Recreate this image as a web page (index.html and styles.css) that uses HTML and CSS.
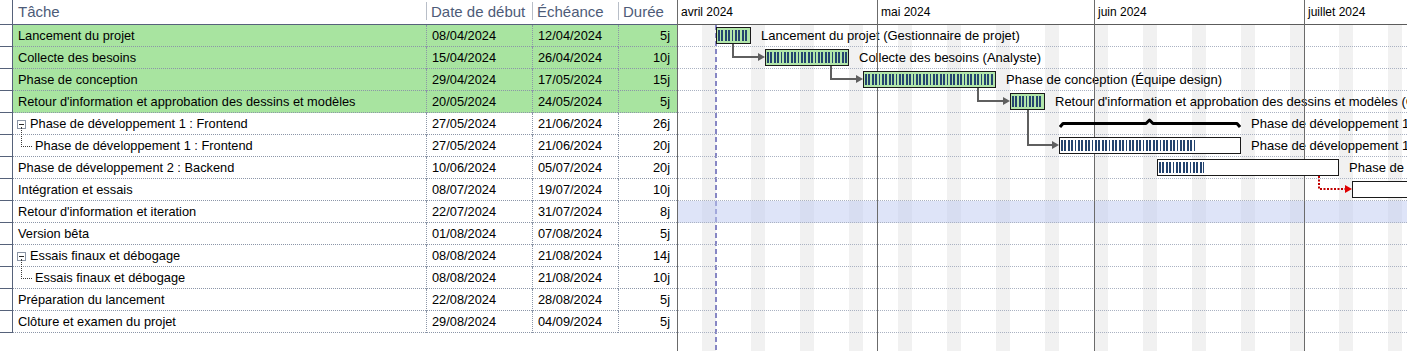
FILE: index.html
```html
<!DOCTYPE html>
<html lang="fr">
<head>
  <meta charset="UTF-8">
  <title>Planning du projet</title>
  <link rel="stylesheet" href="styles.css">
</head>
<body>
<div class="app">
  <div class="grid">
    <div class="grid-head">
      <div class="rh"></div>
      <div class="c">Tâche</div>
      <div class="c">Date de début</div>
      <div class="c">Échéance</div>
      <div class="c">Durée</div>
    </div>
    <div class="grid-row done">
      <div class="rh"></div><div class="c">Lancement du projet</div><div class="c">08/04/2024</div><div class="c">12/04/2024</div><div class="c num">5j</div>
    </div>
    <div class="grid-row done">
      <div class="rh"></div><div class="c">Collecte des besoins</div><div class="c">15/04/2024</div><div class="c">26/04/2024</div><div class="c num">10j</div>
    </div>
    <div class="grid-row done">
      <div class="rh"></div><div class="c">Phase de conception</div><div class="c">29/04/2024</div><div class="c">17/05/2024</div><div class="c num">15j</div>
    </div>
    <div class="grid-row done">
      <div class="rh"></div><div class="c">Retour d'information et approbation des dessins et modèles</div><div class="c">20/05/2024</div><div class="c">24/05/2024</div><div class="c num">5j</div>
    </div>
    <div class="grid-row">
      <div class="rh"></div><div class="c parent"><span class="tgl"></span>Phase de développement 1 : Frontend</div><div class="c">27/05/2024</div><div class="c">21/06/2024</div><div class="c num">26j</div>
    </div>
    <div class="grid-row">
      <div class="rh"></div><div class="c child">Phase de développement 1 : Frontend</div><div class="c">27/05/2024</div><div class="c">21/06/2024</div><div class="c num">20j</div>
    </div>
    <div class="grid-row">
      <div class="rh"></div><div class="c">Phase de développement 2 : Backend</div><div class="c">10/06/2024</div><div class="c">05/07/2024</div><div class="c num">20j</div>
    </div>
    <div class="grid-row">
      <div class="rh"></div><div class="c">Intégration et essais</div><div class="c">08/07/2024</div><div class="c">19/07/2024</div><div class="c num">10j</div>
    </div>
    <div class="grid-row">
      <div class="rh"></div><div class="c">Retour d'information et iteration</div><div class="c">22/07/2024</div><div class="c">31/07/2024</div><div class="c num">8j</div>
    </div>
    <div class="grid-row">
      <div class="rh"></div><div class="c">Version bêta</div><div class="c">01/08/2024</div><div class="c">07/08/2024</div><div class="c num">5j</div>
    </div>
    <div class="grid-row">
      <div class="rh"></div><div class="c parent"><span class="tgl"></span>Essais finaux et débogage</div><div class="c">08/08/2024</div><div class="c">21/08/2024</div><div class="c num">14j</div>
    </div>
    <div class="grid-row">
      <div class="rh"></div><div class="c child">Essais finaux et débogage</div><div class="c">08/08/2024</div><div class="c">21/08/2024</div><div class="c num">10j</div>
    </div>
    <div class="grid-row">
      <div class="rh"></div><div class="c">Préparation du lancement</div><div class="c">22/08/2024</div><div class="c">28/08/2024</div><div class="c num">5j</div>
    </div>
    <div class="grid-row">
      <div class="rh"></div><div class="c">Clôture et examen du projet</div><div class="c">29/08/2024</div><div class="c">04/09/2024</div><div class="c num">5j</div>
    </div>
  </div>

  <div class="chart">
    <div class="chart-head"></div>
    <div class="chart-body">
      <div class="today"></div>
      <div class="g-row">
        <div class="bar done" style="left:38px;width:35px"><i class="prog"></i></div>
        <span class="lbl" style="left:83px">Lancement du projet (Gestionnaire de projet)</span>
      </div>
      <div class="g-row">
        <div class="bar done" style="left:87px;width:84px"><i class="prog"></i></div>
        <span class="lbl" style="left:181px">Collecte des besoins (Analyste)</span>
      </div>
      <div class="g-row">
        <div class="bar done" style="left:185px;width:133px"><i class="prog"></i></div>
        <span class="lbl" style="left:328px">Phase de conception (Équipe design)</span>
      </div>
      <div class="g-row">
        <div class="bar done" style="left:332px;width:35px"><i class="prog"></i></div>
        <span class="lbl" style="left:377px">Retour d'information et approbation des dessins et modèles (Client)</span>
      </div>
      <div class="g-row">
        <svg class="summary" style="left:381px" width="182" height="20" viewBox="0 0 182 20">
          <path d="M1 14 L4 10.5 H87 L90.5 7 L94 10.5 H178 L181 14" fill="none" stroke="#000" stroke-width="3" stroke-linejoin="round"/>
        </svg>
        <span class="lbl" style="left:573px">Phase de développement 1 : Frontend</span>
      </div>
      <div class="g-row">
        <div class="bar" style="left:381px;width:182px"><i class="prog" style="width:134px"></i></div>
        <span class="lbl" style="left:573px">Phase de développement 1 : Frontend (Équipe front)</span>
      </div>
      <div class="g-row">
        <div class="bar" style="left:479px;width:182px"><i class="prog" style="width:45px"></i></div>
        <span class="lbl" style="left:671px">Phase de développement 2 : Backend</span>
      </div>
      <div class="g-row">
        <div class="bar" style="left:674px;width:140px"></div>
      </div>
      <div class="g-row sel"></div>
      <div class="g-row"></div>
      <div class="g-row"></div>
      <div class="g-row"></div>
      <div class="g-row"></div>
      <div class="g-row"></div>

      <svg class="links" width="729" height="326" viewBox="0 0 729 326">
        <g fill="none" stroke="#5f5f5f" stroke-width="2">
          <path d="M55 19 V32 H81"/>
          <path d="M153 41 V54 H179"/>
          <path d="M300 63 V76 H326"/>
          <path d="M350 85 V120 H375"/>
        </g>
        <g fill="#5f5f5f">
          <polygon points="80,28 87,32 80,36"/>
          <polygon points="178,50 185,54 178,58"/>
          <polygon points="325,72 332,76 325,80"/>
          <polygon points="374,116 381,120 374,124"/>
        </g>
        <path d="M641 151 V164 H668" fill="none" stroke="#c00000" stroke-width="2" stroke-dasharray="2 1.5"/>
        <polygon points="667,160 674,164 667,168" fill="#e00000"/>
      </svg>
    </div>
    <div class="months">
      <div class="month" style="width:199px">avril 2024</div>
      <div class="month" style="width:217px">mai 2024</div>
      <div class="month" style="width:210px">juin 2024</div>
      <div class="month">juillet 2024</div>
    </div>
  </div>
</div>
</body>
</html>
```

FILE: styles.css
```css
body {
  margin: 0;
  background: #fff;
  color: #000;
  font: 13px "Liberation Sans", Arial, sans-serif;
}

.app {
  display: flex;
  height: 351px;
  overflow: hidden;
}

/* left grid */

.grid {
  flex: none;
  width: 678px;
  border-right: 1px solid #6a6a6a;
  box-sizing: border-box;
}

.grid-head,
.grid-row {
  display: grid;
  grid-template-columns: 13px 413px 106px 86px 59px;
}

.grid-head {
  height: 25px;
  border-bottom: 1px solid #56627a;
  box-sizing: border-box;
}

.grid-head .c {
  position: relative;
  font-size: 15px;
  line-height: 23px;
  color: #4d5b78;
  padding-left: 5px;
  white-space: nowrap;
}

.grid-head .c + .c::before {
  content: "";
  position: absolute;
  left: 0;
  top: 2px;
  bottom: 4px;
  border-left: 1px solid #b8bec8;
}

.rh {
  border-right: 1px solid #56627a;
}

.grid-row {
  height: 22px;
}

.grid-row .rh {
  border-bottom: 1px solid #56627a;
}

.grid-row .c {
  font-size: 12.8px;
  line-height: 21px;
  padding-left: 5px;
  border-bottom: 1px dotted #8c96a8;
  white-space: nowrap;
}

.grid-row .c + .c {
  border-left: 1px dotted #8c96a8;
}

.grid-row .num {
  text-align: right;
  padding-right: 7px;
}

.grid-row.done .c {
  background: #a8e4a0;
}

.grid-row .parent {
  padding-left: 4px;
}

.tgl {
  display: inline-block;
  width: 9px;
  height: 9px;
  margin-right: 4px;
  box-sizing: border-box;
  border: 1px solid #8a94a4;
  background: #fff linear-gradient(#2a2a2a, #2a2a2a) center / 5px 1px no-repeat;
  vertical-align: -1px;
}

.grid-row .child {
  position: relative;
  padding-left: 22px;
}

.grid-row .child::before {
  content: "";
  position: absolute;
  left: 8px;
  top: -8px;
  width: 10px;
  height: 19px;
  border-left: 1px dotted #3a3a3a;
  border-bottom: 1px dotted #3a3a3a;
}

/* gantt */

.chart {
  flex: 1;
  position: relative;
  display: flex;
  flex-direction: column;
  min-width: 0;
}

.chart-head {
  flex: none;
  height: 25px;
  border-bottom: 1px solid #5c5c5c;
  box-sizing: border-box;
}

.chart-body {
  flex: 1;
  position: relative;
  background: repeating-linear-gradient(90deg, transparent 0 24px, #f1f1f1 24px 38px, transparent 38px 49px);
}

.months {
  position: absolute;
  top: 0;
  left: 0;
  right: 0;
  bottom: 0;
  display: flex;
  pointer-events: none;
  z-index: 1;
}

.month {
  flex: none;
  box-sizing: border-box;
  padding-left: 3px;
  font-size: 12px;
  line-height: 24px;
  white-space: nowrap;
}

.month + .month {
  border-left: 1px solid #6b6b6b;
}

.month:last-child {
  flex: 1;
}

.today {
  position: absolute;
  left: 37px;
  top: 0;
  bottom: 0;
  width: 2px;
  background: repeating-linear-gradient(180deg, #8686c4 0 5px, transparent 5px 8px);
}

.g-row {
  position: relative;
  height: 22px;
  box-sizing: border-box;
  border-bottom: 1px dotted #aab2c2;
}

.g-row.sel {
  background: rgba(190, 202, 241, 0.5);
}

.bar {
  position: absolute;
  top: 2px;
  height: 17px;
  box-sizing: border-box;
  border: 1px solid #1a1a1a;
  background: #fff;
  z-index: 3;
}

.bar.done {
  background: #b2e6aa;
}

.prog {
  position: absolute;
  left: 1px;
  top: 2px;
  bottom: 2px;
  background: repeating-linear-gradient(90deg, #24446f 0 1.8px, transparent 1.8px 3.4px);
}

.bar.done .prog {
  right: 1px;
}

.lbl {
  position: absolute;
  top: 0;
  line-height: 21px;
  white-space: nowrap;
}

.summary {
  position: absolute;
  top: 0;
  z-index: 3;
}

.links {
  position: absolute;
  top: 0;
  left: 0;
  z-index: 2;
  pointer-events: none;
}
```
